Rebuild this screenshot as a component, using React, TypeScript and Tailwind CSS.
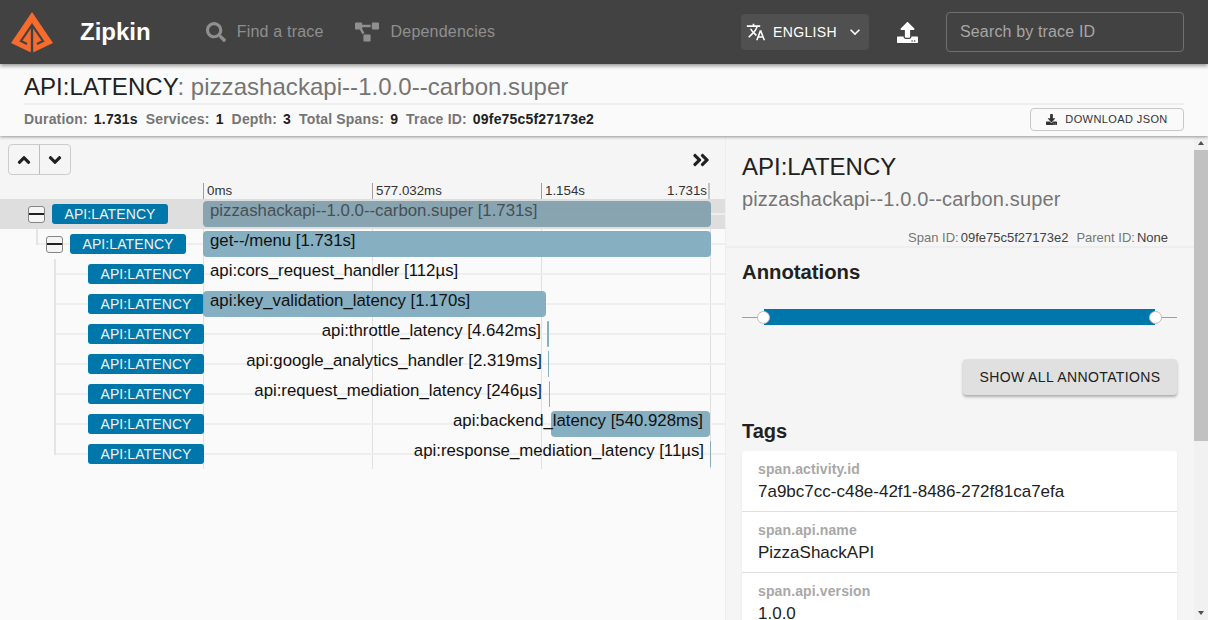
import { FaSearch, FaProjectDiagram, FaUpload, FaDownload, FaAngleUp, FaAngleDown, FaAngleDoubleRight } from 'react-icons/fa';
import { MdTranslate, MdExpandMore } from 'react-icons/md';

const rows = [
  { depth: 0, text: 'pizzashackapi--1.0.0--carbon.super [1.731s]', barLeft: 0, barWidth: 508, textLeft: 7, parent: true },
  { depth: 1, text: 'get--/menu [1.731s]', barLeft: 0, barWidth: 508, textLeft: 7, parent: true },
  { depth: 2, text: 'api:cors_request_handler [112µs]', barLeft: 0, barWidth: 0, textLeft: 7 },
  { depth: 2, text: 'api:key_validation_latency [1.170s]', barLeft: 0, barWidth: 343, textLeft: 7 },
  { depth: 2, text: 'api:throttle_latency [4.642ms]', barLeft: 344, barWidth: 1.5, textRight: 169 },
  { depth: 2, text: 'api:google_analytics_handler [2.319ms]', barLeft: 345, barWidth: 1, textRight: 168 },
  { depth: 2, text: 'api:request_mediation_latency [246µs]', barLeft: 346, barWidth: 1, textRight: 168 },
  { depth: 2, text: 'api:backend_latency [540.928ms]', barLeft: 348, barWidth: 159, textRight: 7 },
  { depth: 2, text: 'api:response_mediation_latency [11µs]', barLeft: 507, barWidth: 1, textRight: 6 },
];

const tags = [
  { name: 'span.activity.id', value: '7a9bc7cc-c48e-42f1-8486-272f81ca7efa' },
  { name: 'span.api.name', value: 'PizzaShackAPI' },
  { name: 'span.api.version', value: '1.0.0' },
];

const ticks = [
  { label: '0ms', left: 0 },
  { label: '577.032ms', left: 169 },
  { label: '1.154s', left: 338 },
];

const Logo = () => (
  <svg width="64" height="64" viewBox="0 0 64 64" className="shrink-0">
    <path d="M32 12 L53 43 L32 53 L11 43 Z" fill="#f76b2d" />
    <path d="M27 44 L21 41 L32 25 L43 41 L37 44" fill="none" stroke="#424242" strokeWidth="2.2" />
    <path d="M32 25 V53" fill="none" stroke="#424242" strokeWidth="2.4" />
  </svg>
);

const Header = () => (
  <header className="relative z-20 flex h-16 shrink-0 items-center bg-[#424242] shadow-[0_2px_4px_rgba(0,0,0,0.4)]">
    <Logo />
    <span className="ml-4 text-2xl font-bold text-white">Zipkin</span>
    <div className="ml-[55px] flex items-center text-[#8f8f8f]">
      <FaSearch size={20} />
      <span className="ml-[11px] text-base tracking-[0.2px]">Find a trace</span>
    </div>
    <div className="ml-[31px] flex items-center text-[#8f8f8f]">
      <FaProjectDiagram size={24} />
      <span className="ml-3 text-base tracking-[0.2px]">Dependencies</span>
    </div>
    <div className="ml-auto flex h-9 w-[128px] items-center rounded bg-[#505050] pl-[5px] text-white">
      <MdTranslate size={20} />
      <span className="ml-[7px] text-sm tracking-[0.35px]">ENGLISH</span>
      <MdExpandMore size={20} className="ml-[8px]" />
    </div>
    <FaUpload size={21} className="ml-[28px] text-white" />
    <div className="ml-[28px] mr-6 flex h-10 w-[238px] items-center rounded border border-[#6f6f6f] px-[13px] text-base tracking-[0.15px] text-[#a6a6a6]">
      Search by trace ID
    </div>
  </header>
);

const SubHeader = () => (
  <div className="relative z-10 h-[72px] shrink-0 bg-[#fafafa] px-6 shadow-[0_1px_3px_rgba(0,0,0,0.4)]">
    <div className="h-[41px] border-b-2 border-[#eeeeee] pt-[8px] text-2xl leading-[30px] tracking-[0.04px]">
      <span className="text-[#212121]">API:LATENCY</span>
      <span className="text-[#757575]">: pizzashackapi--1.0.0--carbon.super</span>
    </div>
    <div className="flex items-center justify-between pt-[3px]">
      <div className="flex gap-2 pb-[2px] text-sm">
        {[['Duration:', '1.731s'], ['Services:', '1'], ['Depth:', '3'], ['Total Spans:', '9'], ['Trace ID:', '09fe75c5f27173e2']].map(([k, v]) => (
          <span key={k} className="font-bold tracking-[0.18px]">
            <span className="mr-[6px] text-[#757575]">{k}</span>
            <span className="text-[#212121]">{v}</span>
          </span>
        ))}
      </div>
      <button className="flex h-[23px] w-[154px] items-center justify-center gap-2 rounded border border-[#c8c8c8] text-[11px] tracking-[0.4px] text-[#333333]">
        <FaDownload size={11} />
        DOWNLOAD JSON
      </button>
    </div>
  </div>
);

const Toolbar = () => (
  <div className="flex h-[46px] items-center justify-between bg-[#f5f5f5] pr-[14px] pl-2 pt-[1px]">
    <div className="flex h-[31px] w-[63px] rounded border border-[#cccccc] text-[#212121]">
      <div className="flex flex-1 items-center justify-center border-r border-[#bdbdbd]">
        <FaAngleUp size={20} />
      </div>
      <div className="flex flex-1 items-center justify-center">
        <FaAngleDown size={20} />
      </div>
    </div>
    <FaAngleDoubleRight size={20} className="text-[#212121]" />
  </div>
);

const TimeRuler = () => (
  <div className="relative h-[17px] bg-[#f5f5f5] text-[13.3px] leading-[16px] text-[#333333]">
    {ticks.map((t) => (
      <span key={t.label} className="absolute top-[1px] border-l border-[#9e9e9e] pl-[3px]" style={{ left: 203 + t.left }}>{t.label}</span>
    ))}
    <span className="absolute top-[1px] right-[15px] border-r-2 border-[#c4c4c4] pr-[1px]">1.731s</span>
  </div>
);

const SpanRow = ({ row, index }: { row: (typeof rows)[number]; index: number }) => (
  <div className={`relative h-[30px] ${index === 0 ? 'bg-[#dedede]' : ''}`}>
    <div
      className="absolute right-0 top-[14px] h-[2px] bg-[#eeeeee]"
      style={{ left: index === 0 ? 203 : 36 + 18 * (row.depth - 1) }}
    />
    <div className="relative flex h-full items-center" style={{ paddingLeft: 28 + 18 * row.depth }}>
      {row.parent ? (
        <div className="relative mr-[7px] h-[17px] w-[17px] rounded-[3px] border border-[#858585] bg-[#f5f5f5]">
          <div className="absolute inset-x-0 top-[6px] h-[2px] bg-[#212121]" />
        </div>
      ) : (
        <div className="mr-[7px] h-[17px] w-[17px]" />
      )}
      <div className="flex h-5 w-[116px] items-center justify-center rounded-[3px] bg-[#0077aa] text-sm tracking-[0.1px] text-[#f2f2f2]">
        API:LATENCY
      </div>
    </div>
    {row.barWidth > 0 && (
      <div
        className={`absolute top-[2px] h-[26px] ${row.barWidth > 5 ? 'rounded-[4px]' : 'rounded-[1px]'} ${index === 0 ? 'bg-[#84a0ae]/95' : 'bg-[#80abbf]/95'}`}
        style={{ left: 203 + row.barLeft, width: row.barWidth }}
      />
    )}
    <div
      className={`absolute top-[2px] text-[16.8px] leading-5 whitespace-nowrap ${index === 0 ? 'text-[#454f55]' : 'text-[#111111]'}`}
      style={row.textRight !== undefined ? { right: 726 - 711 + row.textRight } : { left: 203 + (row.textLeft ?? 0) }}
    >
      {row.text}
    </div>
  </div>
);

const Timeline = () => (
  <div className="relative w-[726px] shrink-0 overflow-hidden border-r border-[#eeeeee] bg-[#fafafa]">
    <Toolbar />
    <TimeRuler />
    {/* time grid, behind the rows */}
    {[203, 372, 541, 710].map((x) => (
      <div key={x} className="absolute top-[63px] h-[270px] w-[1px] bg-[#e0e0e0]" style={{ left: x }} />
    ))}
    <div className="relative">
      {rows.map((row, i) => (
        <SpanRow key={row.text} row={row} index={i} />
      ))}
      {/* tree connectors */}
      <div className="absolute left-[36px] top-[30px] h-[16px] w-[2px] bg-[#e4e4e4]" />
      <div className="absolute left-[54px] top-[60px] h-[196px] w-[2px] bg-[#e4e4e4]" />
    </div>
  </div>
);

const Details = () => (
  <div className="relative flex-1 overflow-hidden bg-[#f5f5f5]">
    <div className="h-[112px] border-b-2 border-[#eeeeee] pl-4 pr-[17px] pt-[16px]">
      <div className="text-2xl leading-[30px] text-[#212121]">API:LATENCY</div>
      <div className="mt-[4px] text-xl leading-[26px] tracking-[0.15px] text-[#757575]">pizzashackapi--1.0.0--carbon.super</div>
      <div className="mt-[18px] flex justify-end gap-2 pr-[9px] text-[13px] leading-4">
        <span><span className="mr-[2px] text-[#757575]">Span ID:</span><span className="text-[#424242]">09fe75c5f27173e2</span></span>
        <span><span className="mr-[2px] text-[#757575]">Parent ID:</span><span className="text-[#424242]">None</span></span>
      </div>
    </div>
    <div className="pl-4 pr-[17px] pt-[12px]">
      <div className="text-[20.3px] leading-6 font-bold text-[#212121]">Annotations</div>
      <div className="relative mt-[25px] flex h-[16px] items-center">
        <div className="h-[1px] w-full bg-[#9e9e9e]" />
        <div className="absolute inset-y-0 left-[22px] right-[22px] bg-[#0077aa]" />
        <div className="absolute left-[15px] top-[2px] h-[13px] w-[13px] rounded-full border border-[#bdbdbd] bg-white" />
        <div className="absolute right-[15px] top-[2px] h-[13px] w-[13px] rounded-full border border-[#bdbdbd] bg-white" />
      </div>
      <div className="mt-[34px] flex justify-end">
        <button className="h-9 w-[214px] rounded bg-[#e0e0e0] text-sm tracking-[0.4px] text-[#212121] shadow-[0_2px_3px_rgba(0,0,0,0.3)]">
          SHOW ALL ANNOTATIONS
        </button>
      </div>
      <div className="mt-[24px] text-xl leading-6 font-bold text-[#212121]">Tags</div>
      <div className="mt-[8px] rounded bg-white shadow-[0_1px_2px_rgba(0,0,0,0.08)]">
        {tags.map((t) => (
          <div key={t.name} className="h-[61px] border-b border-[#e0e0e0] px-4 pt-[10px]">
            <div className="text-[14px] leading-4 font-bold tracking-[0.12px] text-[#a8a8a8]">{t.name}</div>
            <div className="mt-[3px] text-[17px] leading-6 text-[#212121]">{t.value}</div>
          </div>
        ))}
      </div>
    </div>
  </div>
);

const Scrollbar = () => (
  <div className="flex w-[14px] shrink-0 flex-col items-center bg-[#f1f1f1]">
    <svg width="14" height="14" viewBox="0 0 14 14" className="shrink-0"><path d="M4 9h6L7 5z" fill="#505050" /></svg>
    <div className="h-[291px] w-full bg-[#c1c1c1]" />
    <div className="flex-1" />
    <svg width="14" height="14" viewBox="0 0 14 14" className="shrink-0"><path d="M4 5h6L7 9z" fill="#505050" /></svg>
  </div>
);

export default function App() {
  return (
    <div className="flex h-[620px] w-[1208px] flex-col overflow-hidden bg-[#fafafa] font-['Liberation_Sans',Arial,sans-serif]">
      <Header />
      <SubHeader />
      <div className="flex min-h-0 flex-1">
        <Timeline />
        <Details />
        <Scrollbar />
      </div>
    </div>
  );
}
